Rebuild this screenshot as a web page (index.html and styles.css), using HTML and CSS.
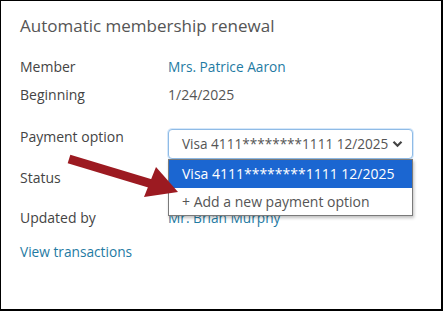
FILE: index.html
```html
<!DOCTYPE html>
<html lang="en">
<head>
    <meta charset="UTF-8">
    <meta name="viewport" content="width=device-width, initial-scale=1.0">
    <title>Automatic membership renewal</title>
    <link rel="stylesheet" href="styles.css">
</head>
<body>
    <div class="card">
        <h1 class="card-title">Automatic membership renewal</h1>

        <div class="details">
            <div class="row">
                <span class="label">Member</span>
                <a class="value link" href="#">Mrs. Patrice Aaron</a>
            </div>
            <div class="row">
                <span class="label">Beginning</span>
                <span class="value">1/24/2025</span>
            </div>
            <div class="row row-payment">
                <span class="label">Payment option</span>
                <div class="select-wrap">
                    <div class="select">
                        <span>Visa 4111********1111 12/2025</span>
                        <svg class="chevron" width="11" height="8" viewBox="0 0 11 8">
                            <path d="M1.5 1.8 L5.5 5.8 L9.5 1.8" fill="none" stroke="#444" stroke-width="2.2"/>
                        </svg>
                    </div>
                    <ul class="dropdown">
                        <li class="option selected">Visa 4111********1111 12/2025</li>
                        <li class="option">+ Add a new payment option</li>
                    </ul>
                </div>
            </div>
            <div class="row row-status">
                <span class="label">Status</span>
            </div>
            <div class="row row-updated">
                <span class="label">Updated by</span>
                <a class="value link" href="#">Mr. Brian Murphy</a>
            </div>
        </div>

        <a class="link transactions" href="#">View transactions</a>

        <!-- callout arrow pointing at the new option -->
        <svg class="callout" width="443" height="311" viewBox="0 0 443 311">
            <line x1="69" y1="159" x2="152" y2="184" stroke="#9c1a21" stroke-width="9"/>
            <polygon points="178,192 156,167 144,197" fill="#9c1a21"/>
        </svg>
    </div>
</body>
</html>
```

FILE: styles.css
```css
:root {
    --label: #444444;
    --title: #555555;
    --link: #1f7ba3;
    --highlight: #1b66d1;
    --arrow: #9c1a21;
}

* {
    box-sizing: border-box;
}

body {
    margin: 0;
    background: #ffffff;
    font-family: 'Open Sans', 'Noto Sans', sans-serif;
    color: var(--label);
}

.card {
    position: relative;
    width: 443px;
    height: 311px;
    border: solid #000;
    border-width: 1px 2px 2px 1px;
    padding: 13px 0 0 19px;
    overflow: hidden;
}

.card-title {
    margin: 0;
    font-size: 17px;
    line-height: 24px;
    font-weight: 400;
    color: var(--title);
}

.details {
    margin-top: 15px;
}

.row {
    display: flex;
    font-size: 14px;
    line-height: 28px;
    height: 28px;
}

.label {
    width: 148px;
    flex: none;
}

.value {
    color: var(--title);
}

.link {
    color: var(--link);
    text-decoration: none;
    font-size: 13.7px;
}

.row-payment {
    margin-top: 14px;
    height: 36px;
}

.row-status {
    margin-top: 5px;
}

.row-updated {
    margin-top: 12px;
}

.select-wrap {
    position: relative;
    margin-top: 6px;
    width: 245px;
}

.select {
    display: flex;
    align-items: center;
    justify-content: space-between;
    height: 30px;
    padding: 0 9px 0 13px;
    border: 1px solid #8fbbe6;
    border-radius: 4px;
    box-shadow: 0 0 0 1px #d6e8fa;
    font-size: 13.6px;
    white-space: nowrap;
    color: var(--title);
    background: #fff;
}

.dropdown {
    position: absolute;
    top: 30px;
    left: 0;
    width: 245px;
    margin: 0;
    padding: 0;
    list-style: none;
    background: #fff;
    border: 1px solid #7a7a7a;
    box-shadow: 1px 2px 3px rgba(0, 0, 0, 0.25);
    z-index: 2;
}

.option {
    height: 27px;
    line-height: 27px;
    padding-left: 13px;
    font-size: 14px;
    white-space: nowrap;
    color: var(--title);
}

.option.selected {
    background: var(--highlight);
    color: #fff;
    font-size: 14px;
    height: 28px;
    line-height: 28px;
}

.transactions {
    display: block;
    margin-top: 6px;
    line-height: 28px;
}

.callout {
    position: absolute;
    left: -1px;
    top: -1px;
    z-index: 3;
    pointer-events: none;
}
```
